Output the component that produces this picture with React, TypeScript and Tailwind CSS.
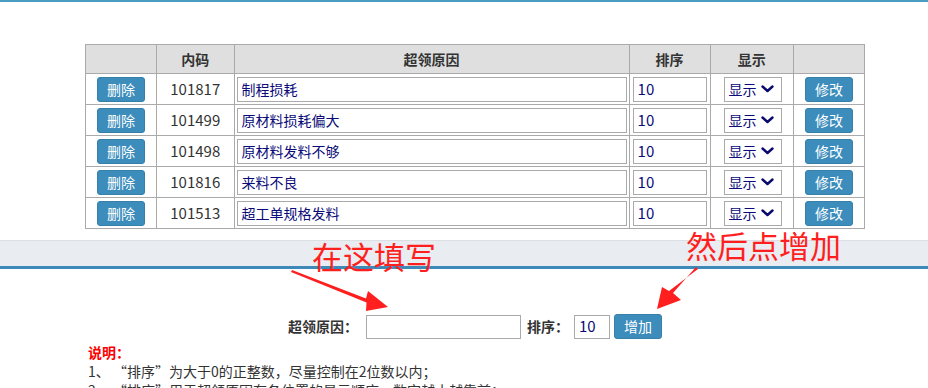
import React from "react";

const rows = [
  { code: "101817", reason: "制程损耗" },
  { code: "101499", reason: "原材料损耗偏大" },
  { code: "101498", reason: "原材料发料不够" },
  { code: "101816", reason: "来料不良" },
  { code: "101513", reason: "超工单规格发料" },
];

const font = { fontFamily: '"Noto Sans CJK SC", "Noto Sans", sans-serif' };

function Btn({ children }: { children: React.ReactNode }) {
  return (
    <div className="inline-flex h-[25px] w-[48px] items-center justify-center rounded-[3px] border border-[#367fa9] bg-[#3c8dbc] text-[14px] text-white">
      {children}
    </div>
  );
}

function Chevron() {
  return (
    <svg width="13" height="8" viewBox="0 0 13 8" className="ml-[4px]">
      <path d="M1.5 1.5 L6.5 6 L11.5 1.5" fill="none" stroke="#0a0a6e" strokeWidth="2.4" strokeLinecap="round" strokeLinejoin="round" />
    </svg>
  );
}

export default function App() {
  return (
    <div className="relative h-[388px] w-[928px] overflow-hidden bg-white text-[14px] text-[#333]" style={font}>
      <div className="h-[2px] w-full bg-[#4a9dc0]" />
      <div className="ml-[85px] mt-[42px] w-[780px]">
        <table className="w-[780px] border-collapse border border-[#aaa] text-center">
          <colgroup>
            <col className="w-[72px]" />
            <col className="w-[79px]" />
            <col className="w-[394px]" />
            <col className="w-[79px]" />
            <col className="w-[84px]" />
            <col className="w-[72px]" />
          </colgroup>
          <thead>
            <tr className="h-[29px] bg-[#dfdfdf] font-bold">
              <th className="border border-[#aaa]"></th>
              <th className="border border-[#aaa]">内码</th>
              <th className="border border-[#aaa]">超领原因</th>
              <th className="border border-[#aaa]">排序</th>
              <th className="border border-[#aaa]">显示</th>
              <th className="border border-[#aaa]"></th>
            </tr>
          </thead>
          <tbody>
            {rows.map((r) => (
              <tr key={r.code} className="h-[31px]">
                <td className="border border-[#aaa] p-0 align-middle">
                  <div className="flex justify-center"><Btn>删除</Btn></div>
                </td>
                <td className="border border-[#aaa] p-0 text-[15px] text-[#333]">{r.code}</td>
                <td className="border border-[#aaa] px-[2px] py-0">
                  <div className="flex h-[25px] w-[390px] items-center border border-[#aaa] pl-[4px] text-left text-[14px] text-[#0a0a78]">
                    {r.reason}
                  </div>
                </td>
                <td className="border border-[#aaa] px-[3px] py-0">
                  <div className="flex h-[25px] w-[74px] items-center border border-[#aaa] pl-[4px] text-left text-[15px] text-[#0a0a78]">
                    10
                  </div>
                </td>
                <td className="border border-[#aaa] p-0">
                  <div className="ml-[13px] flex h-[25px] w-[58px] items-center border border-[#aaa] pl-[4px] text-[14px] text-[#0a0a78]">
                    显示<Chevron />
                  </div>
                </td>
                <td className="border border-[#aaa] p-0">
                  <div className="flex justify-center"><Btn>修改</Btn></div>
                </td>
              </tr>
            ))}
          </tbody>
        </table>
      </div>
      <div className="mt-[11px] h-[26px] w-full border-t border-[#dcdfe4] bg-[#e9ecf1]" />
      <div className="h-[3px] w-full bg-[#3d8ab8]" />
      <div className="ml-[85px] mt-[45px] flex w-[780px] items-center">
        <div className="ml-[203px] font-bold text-[#333]">超领原因：</div>
        <div className="ml-[8px] h-[24px] w-[155px] border border-[#aaa]" />
        <div className="ml-[6px] font-bold text-[#333]">排序：</div>
        <div className="ml-[5px] flex h-[24px] w-[36px] items-center border border-[#aaa] pl-[4px] text-[15px] text-[#0a0a78]">10</div>
        <div className="ml-[4px]"><Btn>增加</Btn></div>
      </div>
      <div className="ml-[88px] mt-[4px] leading-[19px]">
        <div className="text-[14px] font-bold text-[#f00]">说明：</div>
        <div className="text-[14px] text-[#333]">1、 “排序”为大于0的正整数，尽量控制在2位数以内；</div>
        <div className="text-[14px] text-[#333]">2、 “排序”用于超领原因在各位置的显示顺序，数字越小越靠前；</div>
      </div>

      <div className="pointer-events-none absolute left-[312px] top-[239px] text-[31px] leading-[34px] text-[#ff1f1f]" style={font}>在这填写</div>
      <div className="pointer-events-none absolute left-[686px] top-[228px] text-[31px] leading-[34px] text-[#ff1f1f]" style={font}>然后点增加</div>
      <svg className="pointer-events-none absolute left-0 top-0" width="928" height="388">
        <polygon points="292,270 366,298.5 368,291 388,307 366,311 366.5,302.5 291,272" fill="#ff1f1f" />
        <polygon points="696,267 673,293 681,300 657,309 662,287 669,291 698,269" fill="#ff1f1f" />
      </svg>
    </div>
  );
}
